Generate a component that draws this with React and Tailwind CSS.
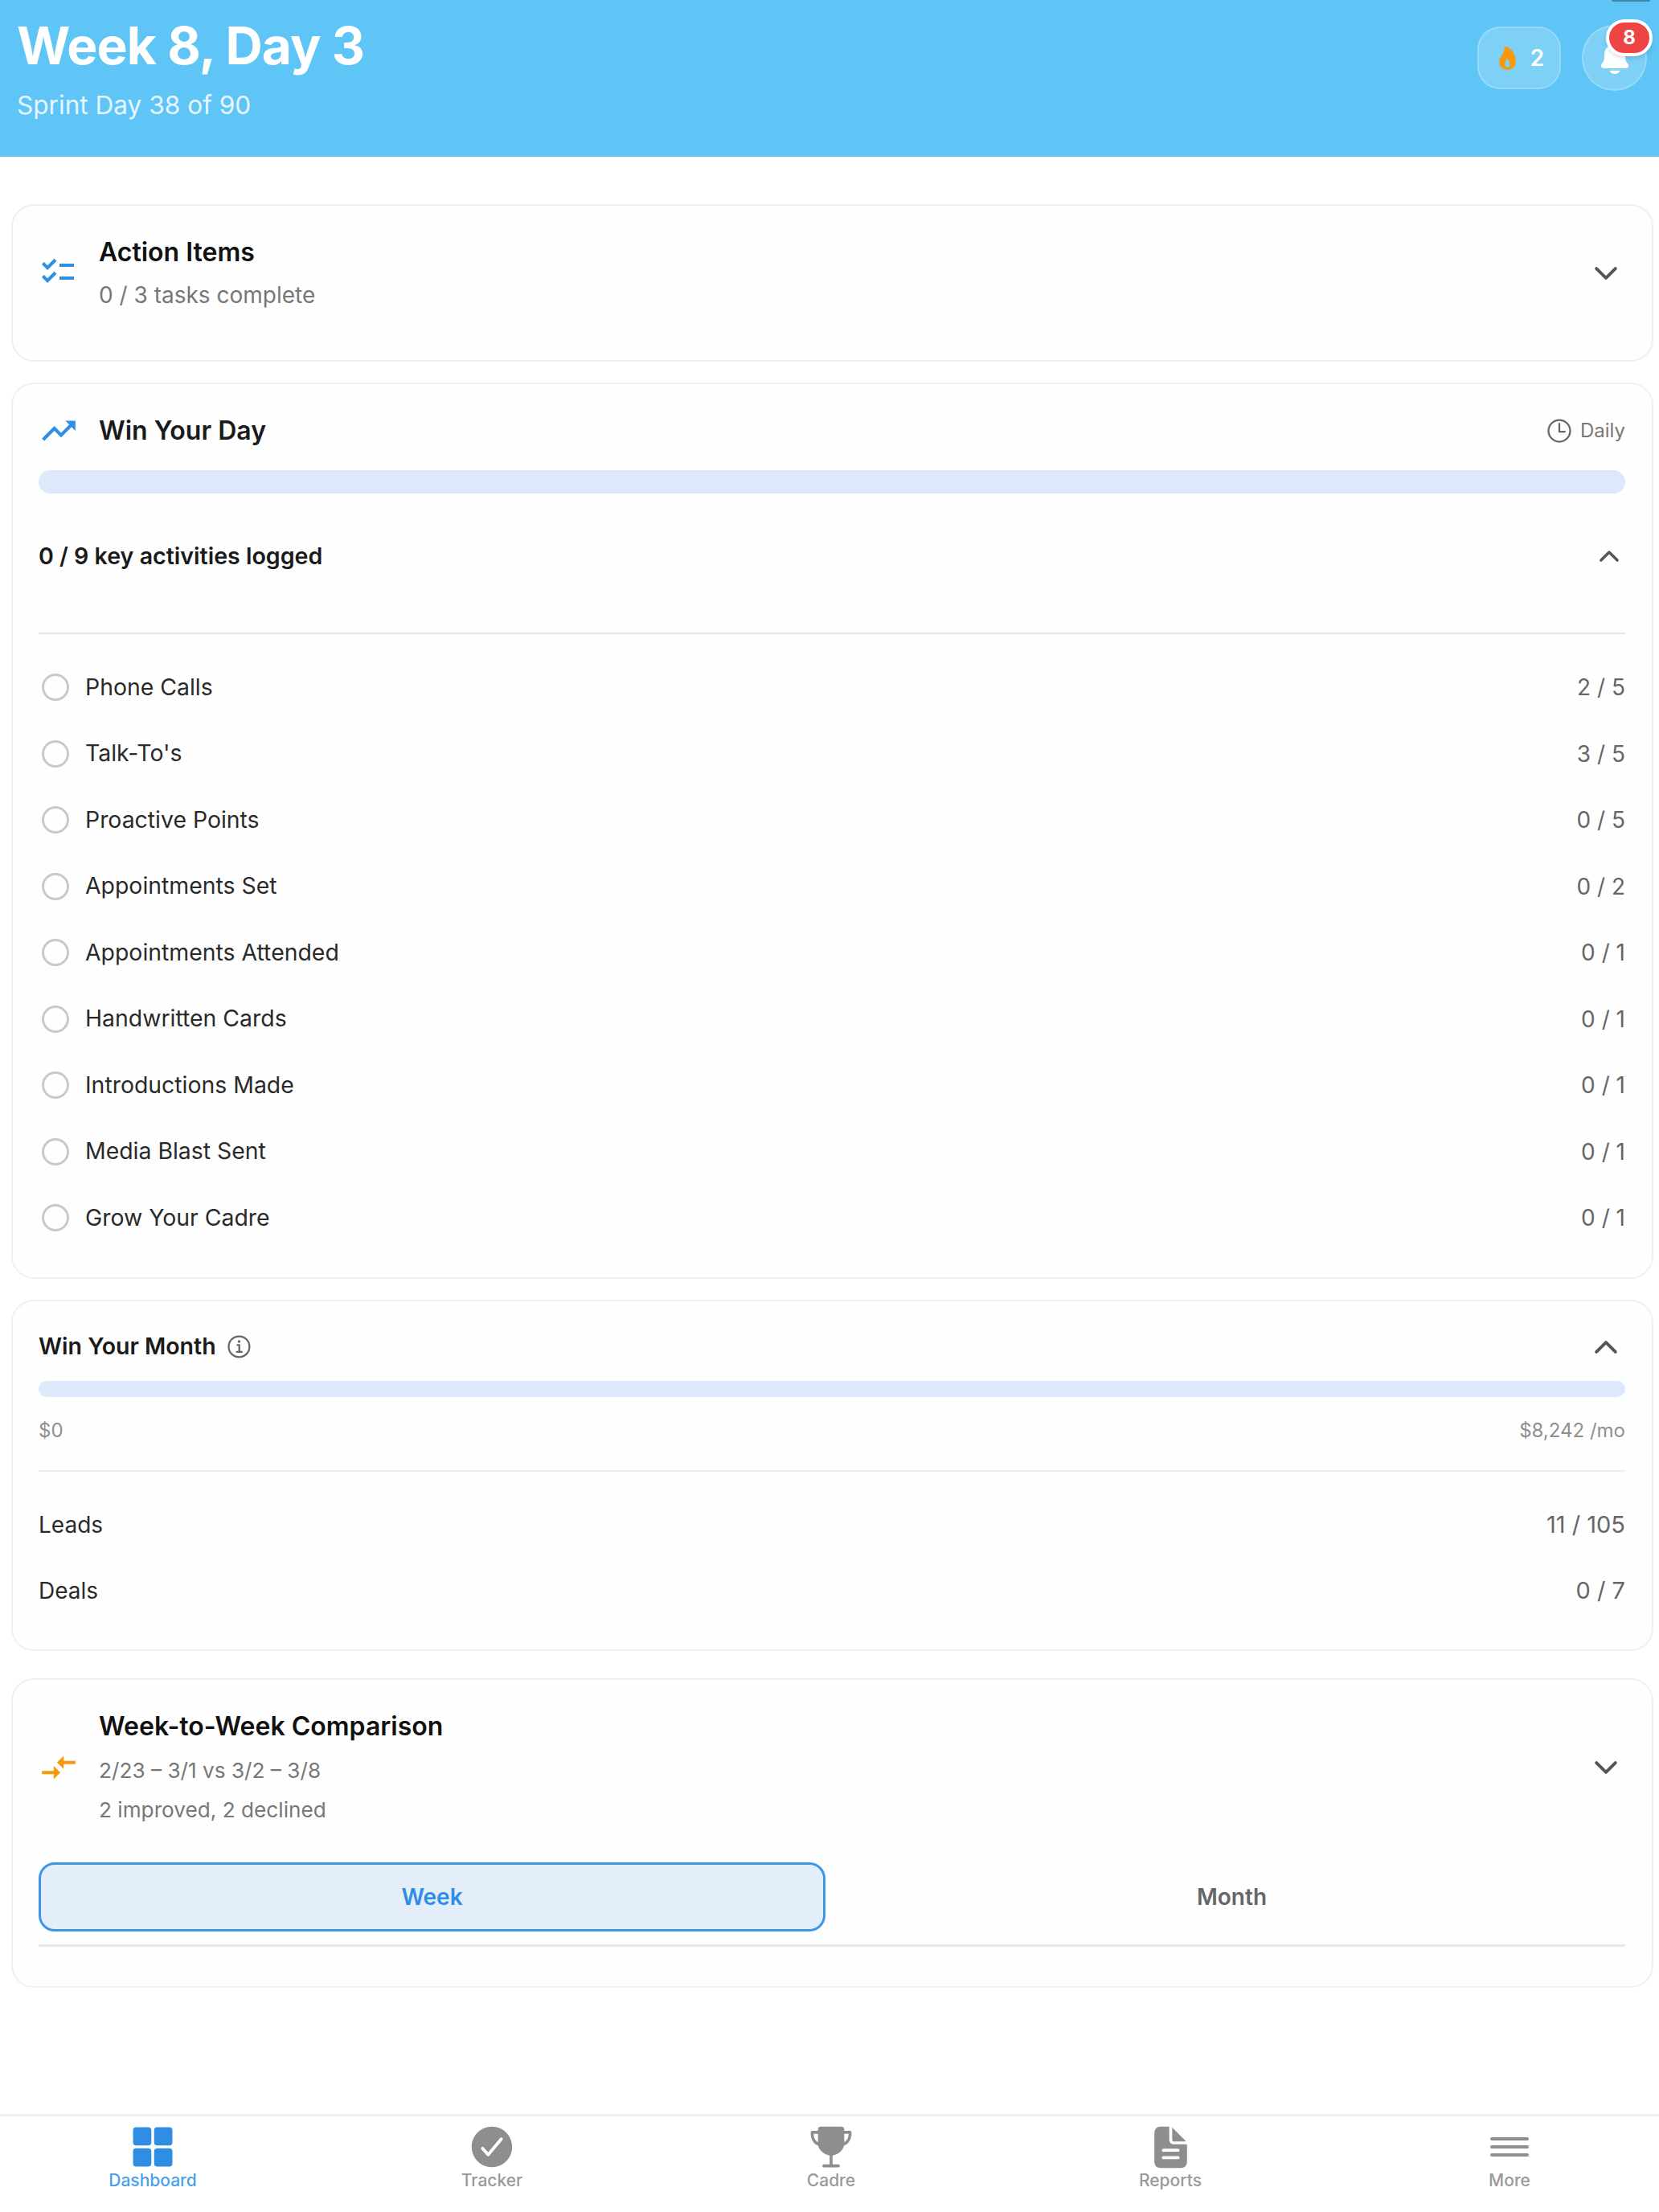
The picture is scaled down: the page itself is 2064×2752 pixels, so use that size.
import {
  IoChevronDown,
  IoChevronUp,
  IoCheckmarkCircle,
  IoDocumentText,
  IoFlame,
  IoGrid,
  IoInformationCircleOutline,
  IoNotifications,
  IoTimeOutline,
  IoTrophy,
} from 'react-icons/io5';
import { MdChecklist, MdCompareArrows, MdTrendingUp } from 'react-icons/md';

const ACTIVITIES = [
  { label: 'Phone Calls', value: '2 / 5' },
  { label: "Talk-To's", value: '3 / 5' },
  { label: 'Proactive Points', value: '0 / 5' },
  { label: 'Appointments Set', value: '0 / 2' },
  { label: 'Appointments Attended', value: '0 / 1' },
  { label: 'Handwritten Cards', value: '0 / 1' },
  { label: 'Introductions Made', value: '0 / 1' },
  { label: 'Media Blast Sent', value: '0 / 1' },
  { label: 'Grow Your Cadre', value: '0 / 1' },
];

// thinner and tighter than the icon-set hamburger
function MenuIcon() {
  return (
    <svg width="48" height="24" viewBox="0 0 48 24" fill="none" stroke="currentColor" strokeWidth="4" strokeLinecap="round">
      <path d="M2 2h44M2 12h44M2 22h44" />
    </svg>
  );
}

const TABS = [
  { label: 'Dashboard', icon: <IoGrid size={56} />, active: true },
  { label: 'Tracker', icon: <IoCheckmarkCircle size={62} /> },
  { label: 'Cadre', icon: <IoTrophy size={58} /> },
  { label: 'Reports', icon: <IoDocumentText size={59} /> },
  { label: 'More', icon: <MenuIcon /> },
];

function Card({ className, children }) {
  return (
    <section className={`rounded-[28px] border-2 border-[#f0f0f0] bg-[#fefefe] pl-[32px] pr-[33px] ${className}`}>
      {children}
    </section>
  );
}

function Header() {
  return (
    <header className="relative flex h-[195px] justify-between bg-[#5ec5f6] pl-[21px] pr-[15px]">
      {/* what is left of the status bar */}
      <div className="absolute right-[11px] top-0 h-[2px] w-[48px] rounded-b-sm bg-[#3d86a5]" />
      <div>
        <h1 className="mt-[21px] text-[64px] font-bold leading-[72px] tracking-[-0.9px] text-white">Week 8, Day 3</h1>
        <p className="mt-[18px] text-[31.6px] leading-[40px] text-[#e6f6fe]">Sprint Day 38 of 90</p>
      </div>
      <div className="mt-[31px] flex h-[82px] items-center gap-[26px]">
        <div className="flex h-[78px] w-[104px] items-center justify-center gap-[12px] rounded-[28px] border-2 border-white/20 bg-white/20">
          <IoFlame size={33} className="text-[#f59b0b]" />
          <span className="text-[28px] font-semibold text-white">2</span>
        </div>
        <div className="relative flex h-[82px] w-[81px] items-center justify-center rounded-full border-2 border-white/20 bg-white/20">
          <IoNotifications size={46} className="text-white" />
          <span className="absolute left-[28px] top-[-9px] flex h-[46px] w-[58px] items-center justify-center rounded-full border-[4px] border-white bg-[#ef4444] text-[24px] font-bold text-white shadow-md">
            8
          </span>
        </div>
      </div>
    </header>
  );
}

function ActionItems() {
  return (
    <Card className="flex h-[196px] items-start justify-between pt-[36px]">
      <div className="flex items-start">
        <MdChecklist size={48} className="mr-[27px] mt-[22px] shrink-0 text-[#2f8fe6]" />
        <div>
          <h2 className="text-[32px] font-semibold leading-[44px] text-[#111]">Action Items</h2>
          <p className="mt-[10px] text-[28px] leading-[42px] text-[#777]">0 / 3 tasks complete</p>
        </div>
      </div>
      <IoChevronDown size={42} className="mr-[3px] mt-[27px] text-[#555]" />
    </Card>
  );
}

function WinYourDay() {
  return (
    <Card className="pb-[32px] pt-[28px]">
      <div className="flex h-[60px] items-center justify-between">
        <div className="flex items-center">
          <MdTrendingUp size={50} className="mr-[25px] text-[#2f8fe6]" />
          <h2 className="text-[32px] font-semibold text-[#1a1a1a]">Win Your Day</h2>
        </div>
        <div className="flex items-center gap-[8px] text-[24px] text-[#777]">
          <IoTimeOutline size={36} className="text-[#666]" />
          Daily
        </div>
      </div>
      <div className="mt-[19px] h-[29px] rounded-full bg-[#dbe9fb]" />
      <div className="mt-[48px] flex h-[60px] items-center justify-between">
        <span className="text-[28.6px] font-semibold text-[#1a1a1a]">0 / 9 key activities logged</span>
        <IoChevronUp size={36} className="mr-[2px] text-[#555]" />
      </div>
      <div className="mt-[65px] h-[2px] bg-[#e6e6e6]" />
      <ul className="pt-[25px]">
        {ACTIVITIES.map(a => (
          <li key={a.label} className="flex h-[82.5px] items-center">
            <span className="ml-[4px] h-[34px] w-[34px] shrink-0 rounded-full border-[3px] border-[#c9c9c9]" />
            <span className="ml-[20px] flex-1 text-[28.4px] text-[#2a2a2a]">{a.label}</span>
            <span className="text-[28px] text-[#666]">{a.value}</span>
          </li>
        ))}
      </ul>
    </Card>
  );
}

function WinYourMonth() {
  return (
    <Card className="pb-[32px] pt-[32px]">
      <div className="flex h-[50px] items-center justify-between">
        <div className="flex items-center gap-[11px]">
          <h2 className="text-[28.5px] font-semibold text-[#1a1a1a]">Win Your Month</h2>
          <IoInformationCircleOutline size={36} className="text-[#666]" />
        </div>
        <IoChevronUp size={42} className="mr-[3px] text-[#555]" />
      </div>
      <div className="mt-[17px] h-[20px] rounded-full bg-[#dbe9fb]" />
      <div className="mt-[27px] flex h-[30px] items-center justify-between text-[24px] text-[#8f8f8f]">
        <span>$0</span>
        <span>$8,242 /mo</span>
      </div>
      <div className="mt-[34px] h-[2px] bg-[#efefef]" />
      <div className="mt-[25px]">
        <div className="flex h-[82px] items-center justify-between text-[28px]">
          <span className="text-[#2a2a2a]">Leads</span>
          <span className="text-[29px] text-[#666]">11 / 105</span>
        </div>
        <div className="flex h-[82px] items-center justify-between text-[28px]">
          <span className="text-[#2a2a2a]">Deals</span>
          <span className="text-[29px] text-[#666]">0 / 7</span>
        </div>
      </div>
    </Card>
  );
}

function Comparison() {
  return (
    <Card className="pb-[49px] pt-[36px]">
      <div className="flex items-center justify-between">
        <div className="flex items-center">
          <MdCompareArrows size={50} className="mr-[25px] shrink-0 text-[#f59b0b]" />
          <div>
            <h2 className="text-[32px] font-semibold leading-[44px] text-[#111]">Week-to-Week Comparison</h2>
            <p className="mt-[12px] text-[26.2px] leading-[42px] text-[#777]">2/23 – 3/1 vs 3/2 – 3/8</p>
            <p className="mt-[7px] text-[26.2px] leading-[42px] text-[#777]">2 improved, 2 declined</p>
          </div>
        </div>
        <IoChevronDown size={42} className="mr-[3px] text-[#555]" />
      </div>
      <div className="mt-[44px] grid grid-cols-2 gap-[16px]">
        <div className="flex h-[86px] items-center justify-center rounded-[20px] border-[3px] border-[#3f95e6] bg-[#e3eefa] text-[28px] font-semibold text-[#2f8de4]">
          Week
        </div>
        <div className="flex h-[86px] items-center justify-center text-[28px] font-semibold text-[#666]">
          Month
        </div>
      </div>
      <div className="mt-[16px] h-[3px] bg-[#e8e8e8]" />
    </Card>
  );
}

function TabBar() {
  return (
    <nav className="flex h-[122px] justify-between border-t-[3px] border-[#efefef] bg-white pl-[135px] pr-[131px] pt-[6px]">
      {TABS.map(({ label, icon, active }) => (
        <div key={label} className={`flex w-[110px] flex-col items-center ${active ? 'text-[#2f8de4]' : 'text-[#8e8e8e]'}`}>
          <div className="flex h-[64px] items-center justify-center">{icon}</div>
          <span className={`text-[21px] font-medium leading-[20px] ${active ? 'text-[#4b9fe9]' : 'text-[#999]'}`}>{label}</span>
        </div>
      ))}
    </nav>
  );
}

export default function App() {
  return (
    <div className="flex min-h-[2752px] flex-col bg-white font-['Inter',sans-serif]">
      <Header />
      <main className="flex flex-1 flex-col pl-[14px] pr-[7px] pt-[59px]">
        <ActionItems />
        <div className="mt-[26px]"><WinYourDay /></div>
        <div className="mt-[26px]"><WinYourMonth /></div>
        <div className="mt-[34px]"><Comparison /></div>
      </main>
      <TabBar />
    </div>
  );
}
